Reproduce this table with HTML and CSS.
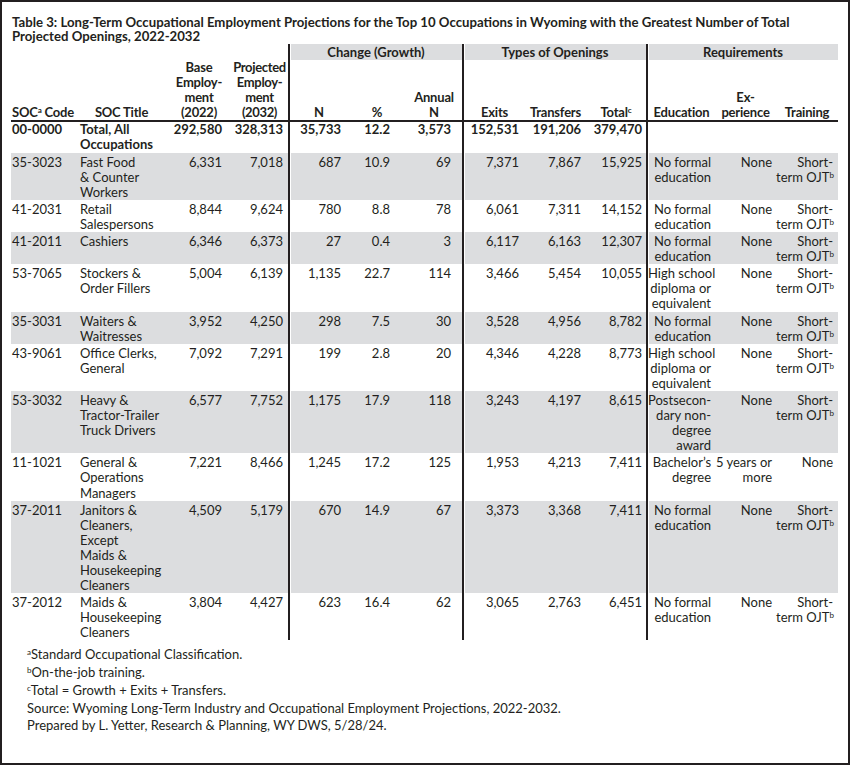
FILE: index.html
```html
<!DOCTYPE html>
<html lang="en">
<head>
<meta charset="utf-8">
<title>Table 3: Long-Term Occupational Employment Projections</title>
<link rel="stylesheet" href="styles.css">
</head>
<body>
<div class="page">
  <h1 class="title">Table 3: Long-Term Occupational Employment Projections for the Top 10 Occupations in Wyoming with the Greatest Number of Total<br>Projected Openings, 2022-2032</h1>
  <table class="proj">
    <colgroup>
      <col class="w-code"><col class="w-title"><col class="w-base"><col class="w-proj">
      <col class="w-n"><col class="w-pct"><col class="w-ann">
      <col class="w-exit"><col class="w-trans"><col class="w-tot">
      <col class="w-edu"><col class="w-exp"><col class="w-train">
    </colgroup>
    <thead>
      <tr class="group">
        <th colspan="4"></th>
        <th colspan="3" class="grp sep">Change (Growth)</th>
        <th colspan="3" class="grp sep">Types of Openings</th>
        <th colspan="3" class="grp sep">Requirements</th>
      </tr>
      <tr class="cols">
        <th class="h-code">SOC<sup>a</sup> Code</th>
        <th>SOC Title</th>
        <th>Base<br>Employ-<br>ment<br>(2022)</th>
        <th class="h-proj">Projected<br>Employ-<br>ment<br>(2032)</th>
        <th class="sep">N</th>
        <th>%</th>
        <th>Annual<br>N</th>
        <th class="sep">Exits</th>
        <th>Transfers</th>
        <th>Total<sup>c</sup></th>
        <th class="sep">Education</th>
        <th>Ex-<br>perience</th>
        <th>Training</th>
      </tr>
    </thead>
    <tbody>
      <tr class="total">
        <td>00-0000</td><td>Total, All<br>Occupations</td><td>292,580</td><td>328,313</td>
        <td class="sep">35,733</td><td>12.2</td><td>3,573</td>
        <td class="sep">152,531</td><td>191,206</td><td>379,470</td>
        <td class="sep"></td><td></td><td></td>
      </tr>
      <tr class="shade">
        <td>35-3023</td><td>Fast Food<br>&amp; Counter<br>Workers</td><td>6,331</td><td>7,018</td>
        <td class="sep">687</td><td>10.9</td><td>69</td>
        <td class="sep">7,371</td><td>7,867</td><td>15,925</td>
        <td class="sep">No formal<br>education</td><td>None</td><td>Short-<br>term OJT<sup>b</sup></td>
      </tr>
      <tr>
        <td>41-2031</td><td>Retail<br>Salespersons</td><td>8,844</td><td>9,624</td>
        <td class="sep">780</td><td>8.8</td><td>78</td>
        <td class="sep">6,061</td><td>7,311</td><td>14,152</td>
        <td class="sep">No formal<br>education</td><td>None</td><td>Short-<br>term OJT<sup>b</sup></td>
      </tr>
      <tr class="shade">
        <td>41-2011</td><td>Cashiers</td><td>6,346</td><td>6,373</td>
        <td class="sep">27</td><td>0.4</td><td>3</td>
        <td class="sep">6,117</td><td>6,163</td><td>12,307</td>
        <td class="sep">No formal<br>education</td><td>None</td><td>Short-<br>term OJT<sup>b</sup></td>
      </tr>
      <tr>
        <td>53-7065</td><td>Stockers &amp;<br>Order Fillers</td><td>5,004</td><td>6,139</td>
        <td class="sep">1,135</td><td>22.7</td><td>114</td>
        <td class="sep">3,466</td><td>5,454</td><td>10,055</td>
        <td class="sep">High school<br>diploma or<br>equivalent</td><td>None</td><td>Short-<br>term OJT<sup>b</sup></td>
      </tr>
      <tr class="shade">
        <td>35-3031</td><td>Waiters &amp;<br>Waitresses</td><td>3,952</td><td>4,250</td>
        <td class="sep">298</td><td>7.5</td><td>30</td>
        <td class="sep">3,528</td><td>4,956</td><td>8,782</td>
        <td class="sep">No formal<br>education</td><td>None</td><td>Short-<br>term OJT<sup>b</sup></td>
      </tr>
      <tr>
        <td>43-9061</td><td>Office Clerks,<br>General</td><td>7,092</td><td>7,291</td>
        <td class="sep">199</td><td>2.8</td><td>20</td>
        <td class="sep">4,346</td><td>4,228</td><td>8,773</td>
        <td class="sep">High school<br>diploma or<br>equivalent</td><td>None</td><td>Short-<br>term OJT<sup>b</sup></td>
      </tr>
      <tr class="shade">
        <td>53-3032</td><td>Heavy &amp;<br>Tractor-Trailer<br>Truck Drivers</td><td>6,577</td><td>7,752</td>
        <td class="sep">1,175</td><td>17.9</td><td>118</td>
        <td class="sep">3,243</td><td>4,197</td><td>8,615</td>
        <td class="sep">Postsecon-<br>dary non-<br>degree<br>award</td><td>None</td><td>Short-<br>term OJT<sup>b</sup></td>
      </tr>
      <tr>
        <td>11-1021</td><td>General &amp;<br>Operations<br>Managers</td><td>7,221</td><td>8,466</td>
        <td class="sep">1,245</td><td>17.2</td><td>125</td>
        <td class="sep">1,953</td><td>4,213</td><td>7,411</td>
        <td class="sep">Bachelor’s<br>degree</td><td>5 years or<br>more</td><td>None</td>
      </tr>
      <tr class="shade">
        <td>37-2011</td><td>Janitors &amp;<br>Cleaners,<br>Except<br>Maids &amp;<br>Housekeeping<br>Cleaners</td><td>4,509</td><td>5,179</td>
        <td class="sep">670</td><td>14.9</td><td>67</td>
        <td class="sep">3,373</td><td>3,368</td><td>7,411</td>
        <td class="sep">No formal<br>education</td><td>None</td><td>Short-<br>term OJT<sup>b</sup></td>
      </tr>
      <tr>
        <td>37-2012</td><td>Maids &amp;<br>Housekeeping<br>Cleaners</td><td>3,804</td><td>4,427</td>
        <td class="sep">623</td><td>16.4</td><td>62</td>
        <td class="sep">3,065</td><td>2,763</td><td>6,451</td>
        <td class="sep">No formal<br>education</td><td>None</td><td>Short-<br>term OJT<sup>b</sup></td>
      </tr>
    </tbody>
  </table>
  <div class="notes">
    <p><sup>a</sup>Standard Occupational Classification.</p>
    <p><sup>b</sup>On-the-job training.</p>
    <p><sup>c</sup>Total = Growth + Exits + Transfers.</p>
    <p>Source: Wyoming Long-Term Industry and Occupational Employment Projections, 2022-2032.</p>
    <p>Prepared by L. Yetter, Research &amp; Planning, WY DWS, 5/28/24.</p>
  </div>
</div>
</body>
</html>
```
FILE: styles.css
```css
* { box-sizing: border-box; }
html, body { margin: 0; padding: 0; background: #ffffff; }
body {
  font-family: Lato, "Open Sans", "Liberation Sans", sans-serif;
  font-size: 13px;
  color: #231f20;
}
.page {
  width: 850px;
  height: 765px;
  border: 2px solid #231f20;
  padding-top: 13px;
}
.title {
  margin: 0 0 0 10px;
  font-size: 13.2px;
  font-weight: 700;
  line-height: 14px;
  white-space: nowrap;
}
sup {
  font-size: 0.62em;
  line-height: 0;
  vertical-align: 0.5em;
}
.proj {
  margin: 1px 0 0 9px;
  width: 827px;
  table-layout: fixed;
  border-collapse: separate;
  border-spacing: 0;
}
.w-code { width: 67px; }
.w-title { width: 87px; }
.w-base { width: 68px; }
.w-proj { width: 55px; }
.w-n { width: 60px; }
.w-pct { width: 58px; }
.w-ann { width: 56px; }
.w-exit { width: 63px; }
.w-trans { width: 61px; }
.w-tot { width: 60px; }
.w-edu { width: 69px; }
.w-exp { width: 61px; }
.w-train { width: 62px; }

.proj th, .proj td {
  padding: 0;
  white-space: nowrap;
  vertical-align: top;
  line-height: 15.1px;
}
.proj .sep {
  border-left: 2px solid #231f20;
  box-shadow: inset 1px 0 0 #ffffff;
}
.proj .group th {
  height: 16px;
  line-height: 16px;
  font-weight: 700;
  text-align: center;
}
.proj .group .grp { background: #dcdddf; }
.proj .cols th {
  vertical-align: bottom;
  text-align: center;
  font-weight: 700;
  letter-spacing: -0.2px;
  border-bottom: 2px solid #231f20;
}
.proj .cols .h-code { text-align: left; padding-left: 1px; }
.proj .cols .h-proj { letter-spacing: -0.35px; padding-right: 2px; }

.proj tbody td { padding-top: 2px; text-align: right; }
.proj tbody tr.total td { padding-top: 0; font-weight: 700; }
.proj tbody tr.shade td { background: #dcdddf; }
.proj tbody td:nth-child(1) { text-align: left; padding-left: 1px; }
.proj tbody td:nth-child(2) { text-align: left; padding-left: 2px; }
.proj tbody td:nth-child(3) { padding-right: 11px; }
.proj tbody td:nth-child(4) { padding-right: 5px; }
.proj tbody td:nth-child(5) { padding-right: 7px; }
.proj tbody td:nth-child(6) { padding-right: 16px; }
.proj tbody td:nth-child(7) { padding-right: 11px; }
.proj tbody td:nth-child(8) { padding-right: 6px; }
.proj tbody td:nth-child(9) { padding-right: 5px; }
.proj tbody td:nth-child(10) { padding-right: 4px; }
.proj tbody td:nth-child(11) { padding-right: 4px; }
.proj tbody td:nth-child(12) { padding-right: 4px; }
.proj tbody td:nth-child(13) { padding-right: 5px; }

.notes {
  margin: 6px 0 0 25px;
  line-height: 17.75px;
}
.notes p { margin: 0; }
```
